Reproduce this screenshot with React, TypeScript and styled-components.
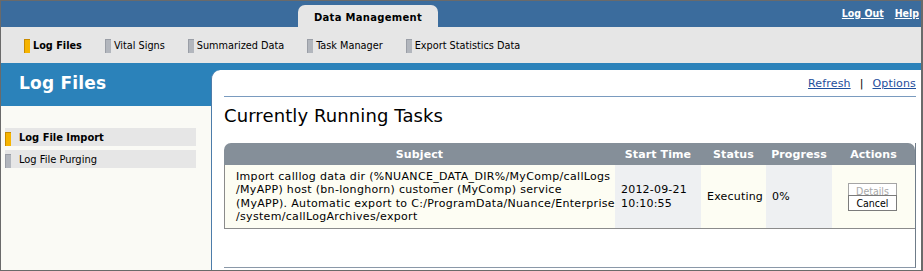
import React from 'react'
import styled, { createGlobalStyle } from 'styled-components'

const GlobalStyle = createGlobalStyle`
  html, body {
    margin: 0;
    padding: 0;
    background: #ffffff;
  }
  * {
    box-sizing: border-box;
  }
`

const verdana = `"DejaVu Sans", Verdana, sans-serif`
const tahoma = `"DejaVu Sans Condensed", "DejaVu Sans", Tahoma, sans-serif`

const Frame = styled.div`
  width: 923px;
  height: 271px;
  border: 1px solid #6a6a6a;
  border-right-width: 2px;
  display: flex;
  flex-direction: column;
  overflow: hidden;
  font-family: ${verdana};
`

const TopBar = styled.div`
  height: 26px;
  background: #3b6c9d;
  display: flex;
  align-items: flex-end;
  padding-left: 297px;
`

const Tab = styled.div`
  width: 140px;
  height: 22px;
  background: #e6e6e6;
  border-radius: 7px 7px 0 0;
  display: flex;
  align-items: center;
  justify-content: center;
  font-family: ${verdana};
  font-weight: bold;
  font-size: 10px;
  letter-spacing: 0.3px;
  color: #000;
  padding-top: 2px;
`

const UserLinks = styled.div`
  margin-left: auto;
  align-self: stretch;
  display: flex;
  align-items: center;
  gap: 11px;
  padding-right: 2px;
  padding-bottom: 2px;
`

const TopLink = styled.a`
  font-family: ${tahoma};
  font-weight: bold;
  font-size: 10.5px;
  color: #ffffff;
  text-decoration: underline;
`

const NavBar = styled.div`
  height: 36px;
  background: #e6e6e6;
  display: flex;
  align-items: center;
  gap: 23px;
  padding-left: 23px;
  padding-top: 1px;
`

const NavItem = styled.div<{ $active?: boolean }>`
  display: flex;
  align-items: center;
  gap: 3px;
  font-family: ${tahoma};
  font-size: 10.8px;
  font-weight: ${p => (p.$active ? 'bold' : 'normal')};
  color: #000;
`

const Marker = styled.span<{ $active?: boolean }>`
  display: inline-block;
  width: 6px;
  height: 14px;
  background: ${p => (p.$active ? '#f6b400' : '#b2b6bd')};
  border-left: 1px solid ${p => (p.$active ? '#c88a00' : '#9a9ea6')};
  border-top: 1px solid ${p => (p.$active ? '#c88a00' : '#9a9ea6')};
`

const Main = styled.div`
  flex: 1;
  display: flex;
  background: #2b82ba;
  min-height: 0;
`

const Sidebar = styled.div`
  width: 210px;
  display: flex;
  flex-direction: column;
`

const SideHeader = styled.div`
  height: 43px;
  display: flex;
  align-items: center;
  padding-left: 18px;
  padding-bottom: 3px;
  color: #ffffff;
  font-family: ${verdana};
  font-weight: bold;
  font-size: 17px;
  letter-spacing: 0.2px;
`

const SideBody = styled.div`
  flex: 1;
  background: #fafaf5;
  padding: 22px 15px 0 4px;
  display: flex;
  flex-direction: column;
  gap: 4px;
`

const SideItem = styled.div<{ $active?: boolean }>`
  height: 18px;
  background: #e6e6e6;
  display: flex;
  align-items: flex-end;
  gap: 8px;
  font-family: ${tahoma};
  font-size: 11px;
  font-weight: ${p => (p.$active ? 'bold' : 'normal')};
  color: #000;

  span:last-child {
    align-self: center;
  }
`

const Content = styled.div`
  flex: 1;
  margin-top: 7px;
  background: #ffffff;
  border-left: 1px solid #4c7caa;
  border-top-left-radius: 9px;
  padding: 0 5px 0 12px;
  display: flex;
  flex-direction: column;
`

const ToolLinks = styled.div`
  height: 27px;
  display: flex;
  align-items: center;
  justify-content: flex-end;
  gap: 9px;
  padding-top: 1px;
  font-size: 11px;
  letter-spacing: 0.15px;
  border-bottom: 1px solid #7a9bbf;
  color: #000;
`

const ContentLink = styled.a`
  color: #1f4e9c;
  text-decoration: underline;
`

const Heading = styled.h1`
  margin: 0;
  height: 46px;
  padding-top: 8px;
  font-family: ${verdana};
  font-weight: normal;
  font-size: 18px;
  letter-spacing: 0.1px;
  color: #000;
`

const TaskPanel = styled.div`
  flex: 1;
  border-right: 1px solid #6f7c89;
  border-bottom: 1px solid #8a98a8;
  margin-bottom: 2px;
`

const Table = styled.table`
  width: 100%;
  border-collapse: separate;
  border-spacing: 0;
  font-size: 11px;
  table-layout: fixed;
`

const HeadCell = styled.th<{ $w: number }>`
  width: ${p => p.$w}px;
  height: 22px;
  background: #858f99;
  color: #ffffff;
  font-weight: bold;
  font-size: 11px;
  letter-spacing: 0.1px;
  text-align: center;
  padding: 0;
  &:first-child {
    border-top-left-radius: 7px;
  }
  &:last-child {
    border-top-right-radius: 7px;
  }
`

const Cell = styled.td<{ $shade?: boolean; $wide?: boolean }>`
  background: ${p => (p.$shade ? '#eef0f2' : '#fdfdf3')};
  vertical-align: middle;
  padding: 5px 5px 4px 6px;
  line-height: 13.4px;
  letter-spacing: ${p => (p.$wide ? '0.32px' : '0.2px')};
  color: #000;
  border-bottom: 1px solid #8b8b8b;
  white-space: nowrap;
  &:first-child {
    border-left: 1px solid #8b8b8b;
    padding-left: 11px;
  }
`

const ActionStack = styled.div`
  display: flex;
  flex-direction: column;
  align-items: center;
  padding-right: 3px;
  padding-top: 1px;
`

const ActionButton = styled.button<{ $disabled?: boolean }>`
  width: 49px;
  height: ${p => (p.$disabled ? '13px' : '16px')};
  margin-top: ${p => (p.$disabled ? '0' : '-1px')};
  padding: 0;
  background: #ffffff;
  border: 1px solid ${p => (p.$disabled ? '#a5a5a5' : '#7b7b7b')};
  border-radius: 0;
  color: ${p => (p.$disabled ? '#a8a8a8' : '#000')};
  font-family: ${tahoma};
  font-size: 10.5px;
  letter-spacing: 0;
  line-height: 14px;
  overflow: hidden;
  position: relative;
  z-index: ${p => (p.$disabled ? 0 : 1)};
`

const navItems = ['Log Files', 'Vital Signs', 'Summarized Data', 'Task Manager', 'Export Statistics Data']

export default function App() {
  return (
    <>
      <GlobalStyle />
      <Frame>
        <TopBar>
          <Tab>Data Management</Tab>
          <UserLinks>
            <TopLink>Log Out</TopLink>
            <TopLink>Help</TopLink>
          </UserLinks>
        </TopBar>
        <NavBar>
          {navItems.map((n, i) => (
            <NavItem key={n} $active={i === 0}>
              <Marker $active={i === 0} />
              <span>{n}</span>
            </NavItem>
          ))}
        </NavBar>
        <Main>
          <Sidebar>
            <SideHeader>Log Files</SideHeader>
            <SideBody>
              <SideItem $active>
                <Marker $active />
                <span>Log File Import</span>
              </SideItem>
              <SideItem>
                <Marker />
                <span>Log File Purging</span>
              </SideItem>
            </SideBody>
          </Sidebar>
          <Content>
            <ToolLinks>
              <ContentLink>Refresh</ContentLink>
              <span>|</span>
              <ContentLink>Options</ContentLink>
            </ToolLinks>
            <Heading>Currently Running Tasks</Heading>
            <TaskPanel>
              <Table>
                <thead>
                  <tr>
                    <HeadCell $w={391}>Subject</HeadCell>
                    <HeadCell $w={86}>Start Time</HeadCell>
                    <HeadCell $w={65}>Status</HeadCell>
                    <HeadCell $w={66}>Progress</HeadCell>
                    <HeadCell $w={83}>Actions</HeadCell>
                  </tr>
                </thead>
                <tbody>
                  <tr>
                    <Cell $wide>
                      Import calllog data dir (%NUANCE_DATA_DIR%/MyComp/callLogs
                      <br />
                      /MyAPP) host (bn-longhorn) customer (MyComp) service
                      <br />
                      (MyAPP). Automatic export to C:/ProgramData/Nuance/Enterprise
                      <br />
                      /system/callLogArchives/export
                    </Cell>
                    <Cell $shade>
                      2012-09-21
                      <br />
                      10:10:55
                    </Cell>
                    <Cell>Executing</Cell>
                    <Cell $shade>0%</Cell>
                    <Cell>
                      <ActionStack>
                        <ActionButton $disabled disabled>Details</ActionButton>
                        <ActionButton>Cancel</ActionButton>
                      </ActionStack>
                    </Cell>
                  </tr>
                </tbody>
              </Table>
            </TaskPanel>
          </Content>
        </Main>
      </Frame>
    </>
  )
}
